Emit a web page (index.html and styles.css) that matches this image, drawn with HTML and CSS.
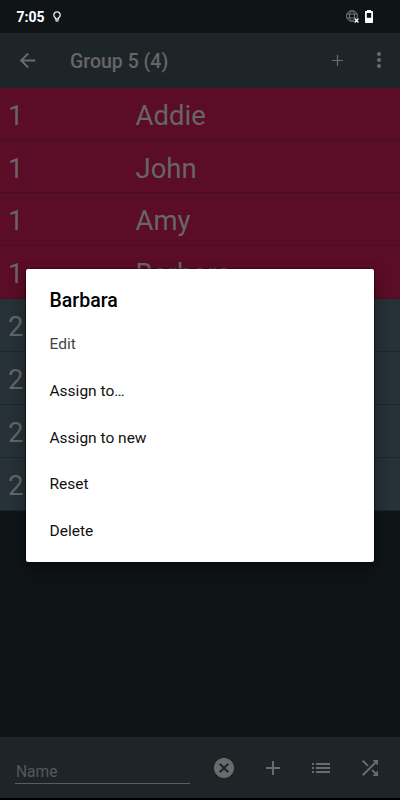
FILE: index.html
```html
<!DOCTYPE html>
<html lang="en">
<head>
  <meta charset="UTF-8">
  <meta name="viewport" content="width=device-width, initial-scale=1.0">
  <title>Group 5 (4)</title>
  <link rel="stylesheet" href="styles.css">
</head>
<body>
  <div class="screen">
    <div class="status">
      <span class="time">7:05</span>
      <svg class="bulb" viewBox="0 0 8 12"><path d="M2.5 8V6.8C1.3 6.2.8 5.2.8 4a3.2 3.2 0 0 1 6.4 0c0 1.2-.5 2.2-1.7 2.8V8z" fill="none" stroke="#eee" stroke-width="1.3"/><path d="M2.5 9.2h3v1.4h-3z" fill="#eee"/></svg>
      <svg class="globe" viewBox="0 0 13 13"><g fill="none" stroke="#777" stroke-width="1"><circle cx="6" cy="6" r="5.4"/><ellipse cx="6" cy="6" rx="2.5" ry="5.4"/><path d="M1 4h10M1 8h10"/></g><path d="M8 8h5v5H8z" fill="#0f1416"/><path d="M8.6 8.6l3.8 3.8M12.4 8.6l-3.8 3.8" stroke="#fff" stroke-width="1.4"/></svg>
      <svg class="battery" viewBox="0 0 8 13"><path d="M2 0h4v1h1.2q.8 0 .8.8v10.4q0 .8-.8.8H.8q-.8 0-.8-.8V1.8Q0 1 .8 1H2z" fill="#fff"/><path d="M1.8 3h4.4v4.8H1.8z" fill="#0f1416"/></svg>
    </div>

    <div class="toolbar">
      <svg class="back" viewBox="0 0 24 24"><path d="M20 11H7.83l5.59-5.59L12 4l-8 8 8 8 1.41-1.41L7.83 13H20v-2z"/></svg>
      <h1>Group 5 (4)</h1>
      <svg class="add" viewBox="0 0 11 11"><path d="M4.9 0h1.2v4.9H11v1.2H6.1V11H4.9V6.1H0V4.9h4.9z"/></svg>
      <svg class="more" viewBox="0 0 4 16"><circle cx="2" cy="2" r="2"/><circle cx="2" cy="8" r="2"/><circle cx="2" cy="14" r="2"/></svg>
    </div>

    <div class="list">
      <div class="row red"><span class="num">1</span><span>Addie</span></div>
      <div class="row red"><span class="num">1</span><span>John</span></div>
      <div class="row red"><span class="num">1</span><span>Amy</span></div>
      <div class="row red"><span class="num">1</span><span>Barbara</span></div>
      <div class="row blue"><span class="num">2</span></div>
      <div class="row blue"><span class="num">2</span></div>
      <div class="row blue"><span class="num">2</span></div>
      <div class="row blue"><span class="num">2</span></div>
    </div>

    <div class="bottom">
      <div class="field">Name</div>
      <div class="actions">
        <svg viewBox="0 0 24 24"><path d="M12 2C6.47 2 2 6.47 2 12s4.47 10 10 10 10-4.47 10-10S17.53 2 12 2zm5 13.59L15.59 17 12 13.41 8.41 17 7 15.59 10.59 12 7 8.41 8.41 7 12 10.59 15.59 7 17 8.41 13.41 12 17 15.59z"/></svg>
        <svg viewBox="0 0 24 24"><path d="M19 13h-6v6h-2v-6H5v-2h6V5h2v6h6v2z"/></svg>
        <svg viewBox="0 0 24 24"><path d="M3 13h2v-2H3v2zm0 4h2v-2H3v2zm0-8h2V7H3v2zm4 4h14v-2H7v2zm0 4h14v-2H7v2zM7 7v2h14V7H7z"/></svg>
        <svg viewBox="0 0 24 24"><path d="M10.59 9.17L5.41 4 4 5.41l5.17 5.17 1.42-1.41zM14.5 4l2.04 2.04L4 18.59 5.41 20 17.96 7.46 20 9.5V4h-5.5zm.33 9.41l-1.41 1.41 3.13 3.13L14.5 20H20v-5.5l-2.04 2.04-3.13-3.13z"/></svg>
      </div>
    </div>

    <div class="dialog">
      <h2>Barbara</h2>
      <div class="option pressed">Edit</div>
      <div class="option">Assign to…</div>
      <div class="option">Assign to new</div>
      <div class="option">Reset</div>
      <div class="option">Delete</div>
    </div>
  </div>
</body>
</html>
```

FILE: styles.css
```css
* {
  box-sizing: border-box;
}
body {
  margin: 0;
  background: #000;
  color: #666;
  font-family: Roboto, sans-serif;
}
h1, h2 {
  margin: 0;
  font-weight: 500;
}
svg {
  display: block;
  flex: none;
  fill: #6b6b6b;
}
.screen {
  position: relative;
  display: flex;
  flex-direction: column;
  width: 400px;
  height: 800px;
  padding-bottom: 2px;
  overflow: hidden;
  background: #000;
}

/* Status bar */
.status {
  display: flex;
  align-items: center;
  height: 33px;
  padding: 0 27px 0 16.5px;
  background: #0f1416;
}
.time {
  width: 36px;
  color: #fff;
  font-size: 14px;
  font-weight: 700;
  line-height: 34px;
}
.bulb {
  width: 8px;
  height: 12px;
}
.globe {
  width: 13px;
  height: 13px;
  margin-left: auto;
}
.battery {
  width: 8px;
  height: 13px;
  margin-left: 6px;
}

/* Toolbar */
.toolbar {
  display: flex;
  align-items: center;
  height: 54.6px;
  padding: 0 19.5px 0 16px;
  background: #1e2528;
}
.toolbar h1 {
  margin-left: 31px;
  font-size: 19.5px;
  line-height: 24px;
  padding-top: 3px;
}
.back {
  width: 23px;
  height: 23px;
}
.add {
  width: 11px;
  height: 11px;
  margin-left: auto;
}
.more {
  width: 4px;
  height: 16px;
  margin-left: 34px;
}

/* List */
.list {
  flex: 1;
  background: #0f1416;
}
.row {
  display: flex;
  height: 52.95px;
  padding-left: 8px;
  border-bottom: 1px solid;
  font-size: 27.5px;
  line-height: 55.4px;
}
.num {
  width: 127.5px;
}
.red {
  background: #5b0c26;
  border-color: #451020;
}
.blue {
  background: #263238;
  border-color: #1d272b;
}

/* Bottom bar */
.bottom {
  display: flex;
  height: 61px;
  padding-left: 15px;
  background: #1e2528;
}
.field {
  width: 175px;
  height: 47px;
  padding: 24px 0 0 1px;
  border-bottom: 1px solid #5a5e60;
  color: #54585a;
  font-size: 15.6px;
  line-height: 22px;
}
.actions {
  display: flex;
  gap: 24.6px;
  margin: 18.5px 0 0 22px;
}
.actions svg {
  width: 24px;
  height: 24px;
}

/* Popup menu */
.dialog {
  position: absolute;
  top: 269px;
  left: 26px;
  width: 348px;
  height: 292.5px;
  padding: 19px 23.5px 0;
  border-radius: 2px;
  background: #fff;
  color: #111;
  box-shadow: 0 0 2px #000, 0 8px 18px rgba(0, 0, 0, 0.4);
}
.dialog h2 {
  height: 33.3px;
  color: #000;
  font-size: 19.5px;
  line-height: 25px;
}
.option {
  height: 46.7px;
  font-size: 15.5px;
  line-height: 47px;
}
.pressed {
  color: #444;
}
```
